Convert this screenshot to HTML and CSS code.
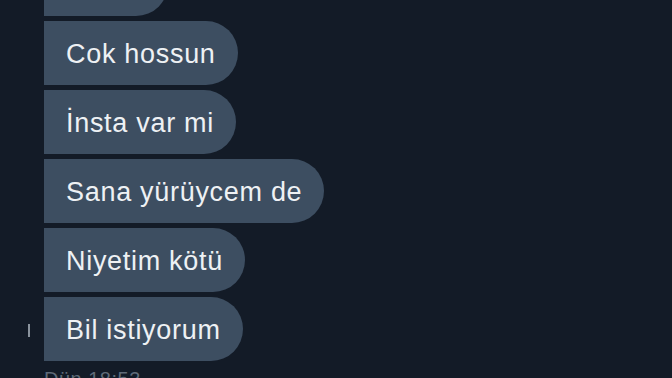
FILE: index.html
```html
<!DOCTYPE html>
<html lang="tr">
<head>
    <meta charset="UTF-8">
    <meta name="viewport" content="width=device-width, initial-scale=1.0">
    <title>Mesajlar</title>
    <link rel="stylesheet" href="styles.css">
</head>
<body>
    <div class="chat">
        <div class="row"><div class="gutter"></div><div class="bubble">Selam</div></div>
        <div class="row"><div class="gutter"></div><div class="bubble">Cok hossun</div></div>
        <div class="row"><div class="gutter"></div><div class="bubble">İnsta var mi</div></div>
        <div class="row"><div class="gutter"></div><div class="bubble">Sana yürüycem de</div></div>
        <div class="row"><div class="gutter"></div><div class="bubble">Niyetim kötü</div></div>
        <div class="row"><div class="gutter"><span class="mark"></span></div><div class="bubble">Bil istiyorum</div></div>
        <div class="time">Dün 18:53</div>
    </div>
</body>
</html>
```

FILE: styles.css
```css
* {
    margin: 0;
    padding: 0;
    box-sizing: border-box;
}

body {
    background-color: #131b27;
    font-family: "Liberation Sans", Arial, sans-serif;
    overflow: hidden;
    height: 378px;
}

.chat {
    display: flex;
    flex-direction: column;
    gap: 5px;
    margin-top: -48px;
}

.row {
    display: flex;
    align-items: stretch;
}

.gutter {
    width: 44px;
    display: flex;
    align-items: center;
    justify-content: flex-end;
    padding-right: 14px;
}

.mark {
    display: block;
    width: 2px;
    height: 13px;
    background-color: #8a939d;
    margin-top: 2px;
}

.bubble {
    background-color: #3d4e61;
    color: #eef1f4;
    height: 64px;
    line-height: 66px;
    font-size: 27px;
    letter-spacing: 0.7px;
    padding: 0 22px 0 22px;
    border-radius: 0 32px 32px 0;
    white-space: nowrap;
}

.time {
    margin-top: 2px;
    padding-left: 44px;
    color: #5f6a78;
    font-size: 20px;
    letter-spacing: 0.5px;
}
```
